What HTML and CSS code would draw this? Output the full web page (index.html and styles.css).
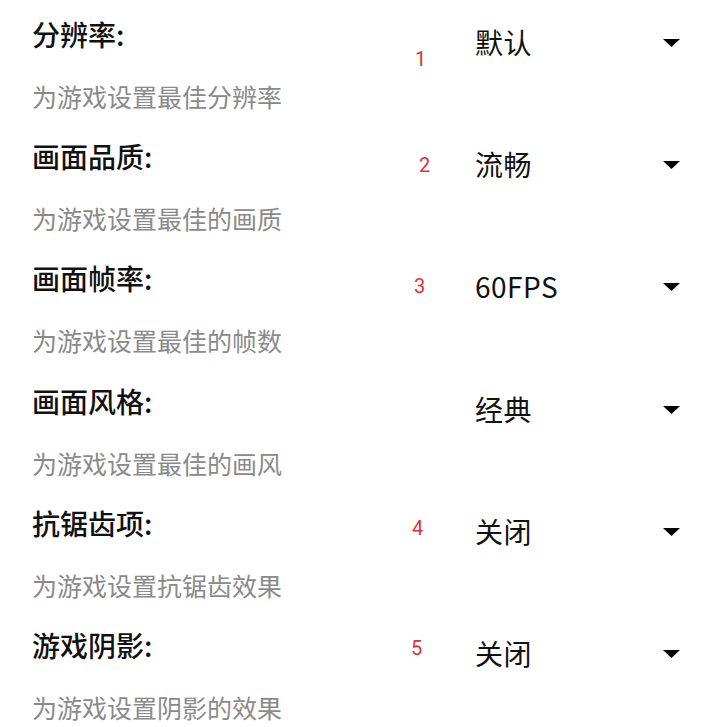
FILE: index.html
```html
<!DOCTYPE html>
<html lang="zh-CN">
<head>
    <meta charset="UTF-8">
    <meta name="viewport" content="width=device-width, initial-scale=1.0">
    <title>游戏设置</title>
    <link rel="stylesheet" href="styles.css">
</head>
<body>
    <div class="lista">
        <div class="item">
            <div class="info">
                <div class="titulo">分辨率:</div>
                <div class="desc">为游戏设置最佳分辨率</div>
            </div>
            <span class="marca m1">1</span>
            <div class="select">
                <span class="valor">默认</span>
                <svg class="seta" width="17" height="8" viewBox="0 0 17 8"><polygon points="0,0 17,0 8.5,8" /></svg>
            </div>
        </div>
        <div class="item">
            <div class="info">
                <div class="titulo">画面品质:</div>
                <div class="desc">为游戏设置最佳的画质</div>
            </div>
            <span class="marca m2">2</span>
            <div class="select">
                <span class="valor">流畅</span>
                <svg class="seta" width="17" height="8" viewBox="0 0 17 8"><polygon points="0,0 17,0 8.5,8" /></svg>
            </div>
        </div>
        <div class="item">
            <div class="info">
                <div class="titulo">画面帧率:</div>
                <div class="desc">为游戏设置最佳的帧数</div>
            </div>
            <span class="marca m3">3</span>
            <div class="select">
                <span class="valor">60FPS</span>
                <svg class="seta" width="17" height="8" viewBox="0 0 17 8"><polygon points="0,0 17,0 8.5,8" /></svg>
            </div>
        </div>
        <div class="item">
            <div class="info">
                <div class="titulo">画面风格:</div>
                <div class="desc">为游戏设置最佳的画风</div>
            </div>
            <div class="select">
                <span class="valor">经典</span>
                <svg class="seta" width="17" height="8" viewBox="0 0 17 8"><polygon points="0,0 17,0 8.5,8" /></svg>
            </div>
        </div>
        <div class="item">
            <div class="info">
                <div class="titulo">抗锯齿项:</div>
                <div class="desc">为游戏设置抗锯齿效果</div>
            </div>
            <span class="marca m4">4</span>
            <div class="select">
                <span class="valor">关闭</span>
                <svg class="seta" width="17" height="8" viewBox="0 0 17 8"><polygon points="0,0 17,0 8.5,8" /></svg>
            </div>
        </div>
        <div class="item">
            <div class="info">
                <div class="titulo">游戏阴影:</div>
                <div class="desc">为游戏设置阴影的效果</div>
            </div>
            <span class="marca m5">5</span>
            <div class="select">
                <span class="valor">关闭</span>
                <svg class="seta" width="17" height="8" viewBox="0 0 17 8"><polygon points="0,0 17,0 8.5,8" /></svg>
            </div>
        </div>
    </div>
</body>
</html>
```

FILE: styles.css
```css
body {
    font-family: "Noto Sans CJK SC", "Noto Sans", sans-serif;
    margin: 0;
    padding: 0;
    background-color: #ffffff;
    color: #111111;
}
.lista {
    display: flex;
    flex-direction: column;
}
.item {
    position: relative;
    display: flex;
    height: 122.2px;
    padding-left: 32px;
    padding-right: 40px;
    box-sizing: border-box;
}
.info {
    flex: 1;
    padding-top: 14px;
}
.titulo {
    font-size: 28px;
    font-weight: 500;
    line-height: 40px;
}
.desc {
    margin-top: 24px;
    font-size: 25px;
    line-height: 36px;
    color: #8a8a8a;
}
.select {
    width: 205px;
    height: 40px;
    margin-top: 22px;
    display: flex;
    align-items: center;
    justify-content: space-between;
}
.valor {
    font-size: 28px;
    line-height: 40px;
    letter-spacing: 0.5px;
}
.seta {
    fill: #000000;
    margin-top: 2px;
}
.marca {
    position: absolute;
    font-family: Roboto, "Noto Sans", sans-serif;
    font-size: 20px;
    line-height: 20px;
    color: #e0303a;
}
.m1 { left: 415px; top: 49px; }
.m2 { left: 419px; top: 33px; }
.m3 { left: 414px; top: 32px; }
.m4 { left: 412px; top: 29px; }
.m5 { left: 411px; top: 27px; }
```
